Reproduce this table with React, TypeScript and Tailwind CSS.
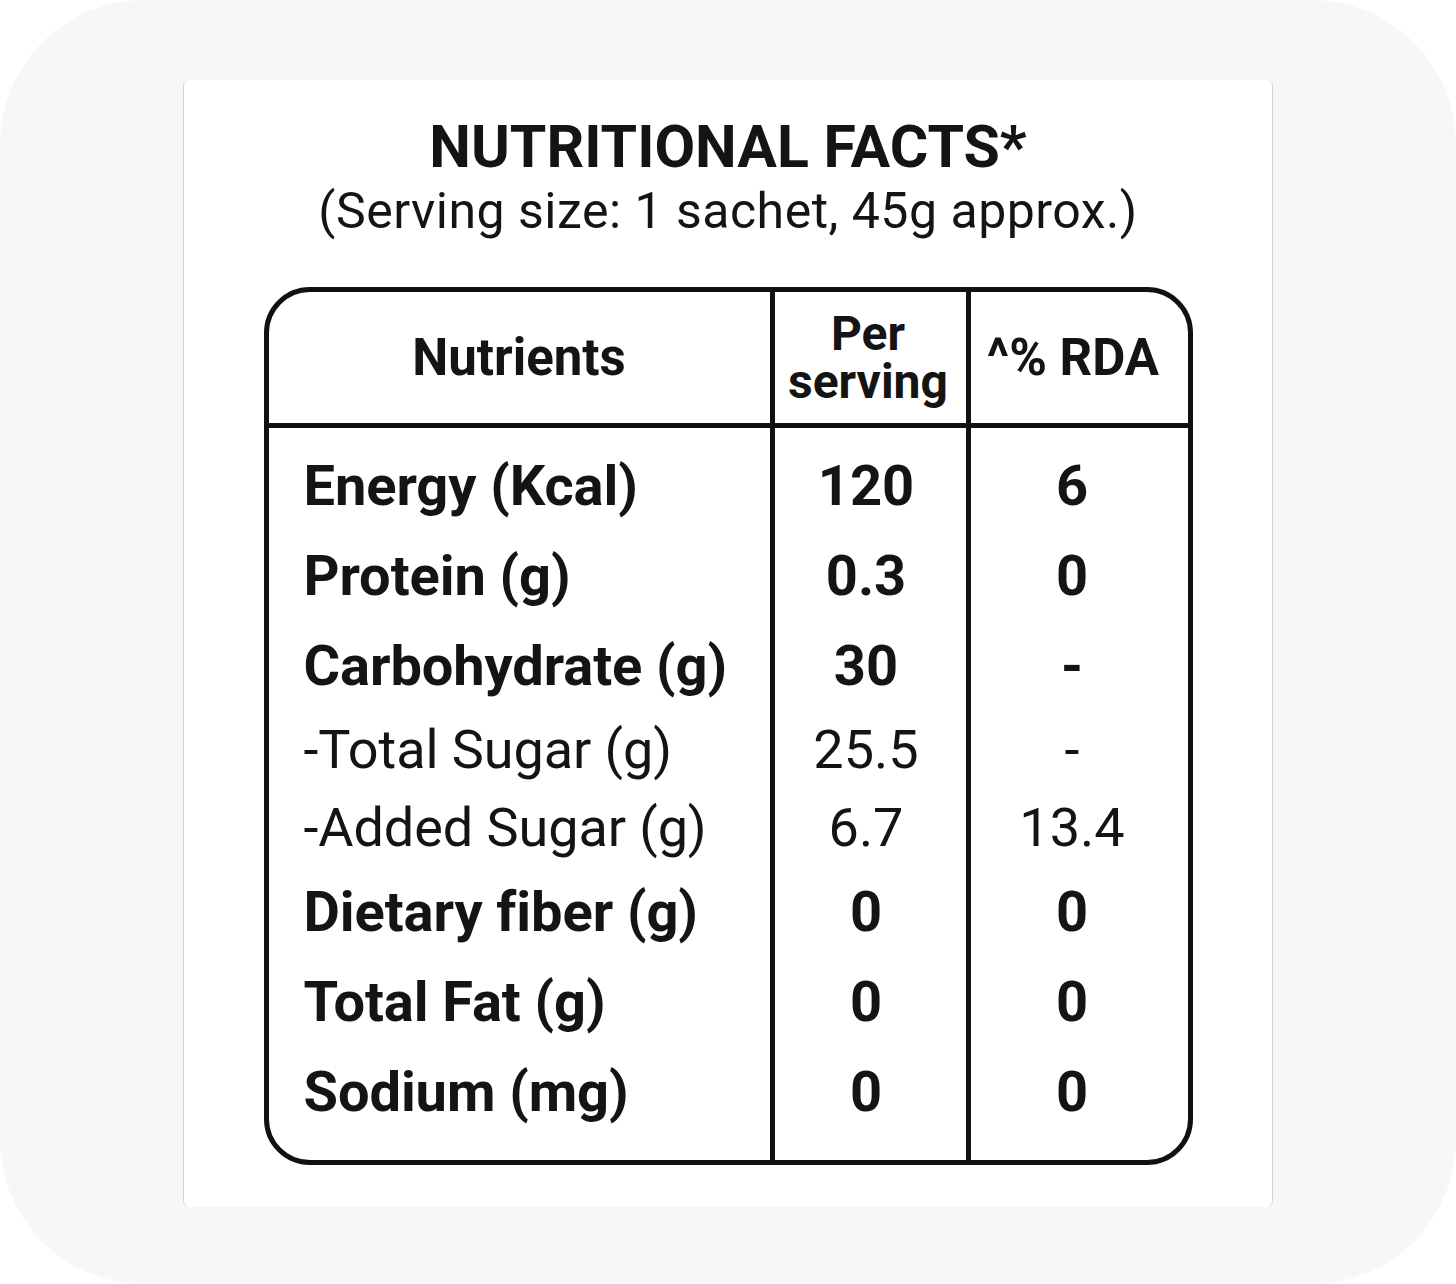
const rows = [
  { name: "Energy (Kcal)", serving: "120", rda: "6", bold: true },
  { name: "Protein (g)", serving: "0.3", rda: "0", bold: true },
  { name: "Carbohydrate (g)", serving: "30", rda: "-", bold: true },
  { name: "-Total Sugar (g)", serving: "25.5", rda: "-", bold: false },
  { name: "-Added Sugar (g)", serving: "6.7", rda: "13.4", bold: false },
  { name: "Dietary fiber (g)", serving: "0", rda: "0", bold: true },
  { name: "Total Fat (g)", serving: "0", rda: "0", bold: true },
  { name: "Sodium (mg)", serving: "0", rda: "0", bold: true },
];

const cell = (bold: boolean) =>
  bold ? "h-[90px] text-[56px] font-bold leading-[90px]" : "h-[78px] text-[54px] font-normal leading-[78px]";

function Column({ field, className }: { field: "name" | "serving" | "rda"; className: string }) {
  return (
    <div className={`flex flex-col pt-[13px] ${className}`}>
      {rows.map((r) => (
        <div key={r.name} className={`${cell(r.bold)} whitespace-nowrap`}>
          {r[field]}
        </div>
      ))}
    </div>
  );
}

export default function App() {
  return (
    <div className="w-[1456px] h-[1284px] bg-white" style={{ fontFamily: "Roboto, 'Noto Sans', sans-serif" }}>
      <div className="h-full rounded-[144px] bg-[#f7f7f7] flex justify-center pt-[80px]">
        <div className="w-[1090px] h-[1127px] bg-white rounded-md border-x border-[#d6d6d6] flex flex-col items-center text-[#141414]">
          <h1 className="mt-[38px] text-[59px] font-bold leading-[58px]">NUTRITIONAL FACTS*</h1>
          <p className="mt-[5px] text-[50px] leading-[60px] font-normal tracking-[0.01em]">
            (Serving size: 1 sachet, 45g approx.)
          </p>

          <div className="mt-[46px] w-[929px] h-[878px] border-[5px] border-[#111] rounded-[46px] overflow-hidden flex flex-col">
            <div className="grid grid-cols-[501px_196px_1fr] h-[136px] shrink-0 border-b-[5px] border-[#111] font-bold">
              <div className="flex items-center justify-center text-[51px] leading-none">Nutrients</div>
              <div className="flex items-center justify-center border-l-[5px] border-[#111] text-center text-[48px] leading-[48px] pr-[4px]">
                Per<br />serving
              </div>
              <div className="flex items-center justify-center border-l-[5px] border-[#111] text-[51px] leading-none pr-[12px]">
                ^% RDA
              </div>
            </div>
            <div className="grid grid-cols-[501px_196px_1fr] flex-1">
              <Column field="name" className="pl-[35px] tracking-[-0.005em]" />
              <Column field="serving" className="border-l-[5px] border-[#111] items-center pr-[8px]" />
              <Column field="rda" className="border-l-[5px] border-[#111] items-center pr-[14px]" />
            </div>
          </div>
        </div>
      </div>
    </div>
  );
}
